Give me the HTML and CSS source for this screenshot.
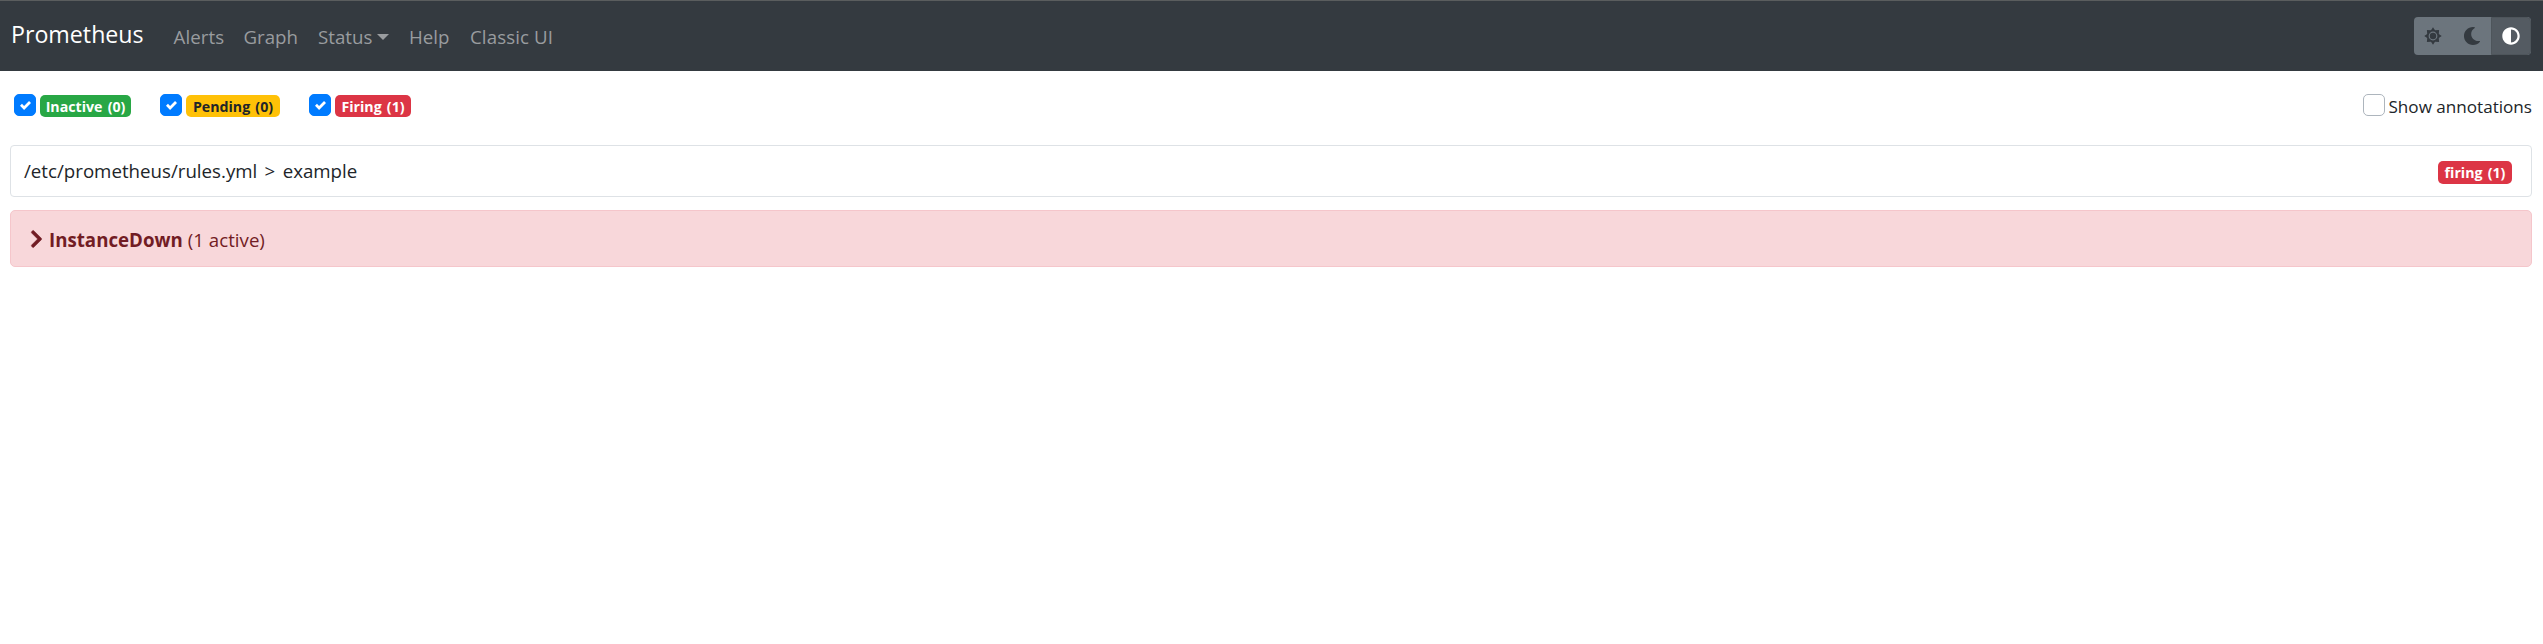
FILE: index.html
```html
<!DOCTYPE html>
<html lang="en">
<head>
<meta charset="utf-8">
<title>Prometheus</title>
<link rel="stylesheet" href="styles.css">
</head>
<body>
<nav class="navbar">
  <a class="brand"><span>Prometheus</span></a>
  <div class="links">
    <a class="w-alerts">Alerts</a>
    <a class="w-graph">Graph</a>
    <a class="w-status">Status<i class="caret"></i></a>
    <a class="w-help">Help</a>
    <a class="w-classic">Classic UI</a>
  </div>
  <div class="themes">
    <button class="theme"><svg width="18" height="18" viewBox="0 0 18 18"><path fill="currentColor" fill-rule="evenodd" d="M9 0.3 11 3.2 15.1 2.9 14.8 7 17.7 9 14.8 11 15.1 15.1 11 14.8 9 17.7 7 14.8 2.9 15.1 3.2 11 .3 9 3.2 7 2.9 2.9 7 3.2ZM9 4.6A4.4 4.4 0 1 0 9 13.4 4.4 4.4 0 1 0 9 4.6Z"/><circle cx="9" cy="9" r="3.2" fill="currentColor"/></svg></button>
    <button class="theme"><svg width="18" height="18" viewBox="0 0 512 512"><path fill="currentColor" d="M283.211 512c78.962 0 151.079-35.925 198.857-94.792 7.068-8.708-.639-21.43-11.562-19.35-124.203 23.654-238.262-71.576-238.262-196.954 0-72.222 38.662-138.635 101.498-174.394 9.686-5.512 7.25-20.197-3.756-22.23A258.156 258.156 0 0 0 283.211 0c-141.309 0-256 114.511-256 256 0 141.309 114.511 256 256 256z"/></svg></button>
    <button class="theme active"><svg width="18" height="18" viewBox="0 0 512 512"><path fill="currentColor" d="M8 256c0 136.966 111.033 248 248 248s248-111.034 248-248S392.966 8 256 8 8 119.033 8 256zm248 184V72c101.705 0 184 82.311 184 184 0 101.705-82.311 184-184 184z"/></svg></button>
  </div>
</nav>
<main>
  <div class="filters">
    <label class="filter f1"><span class="box on"><svg width="11" height="11" viewBox="0 0 8 8"><path fill="#fff" d="M6.564.75l-3.59 3.612-1.538-1.55L0 4.26l2.974 2.99L8 2.193z"/></svg></span><span class="badge green">Inactive (0)</span></label>
    <label class="filter f2"><span class="box on"><svg width="11" height="11" viewBox="0 0 8 8"><path fill="#fff" d="M6.564.75l-3.59 3.612-1.538-1.55L0 4.26l2.974 2.99L8 2.193z"/></svg></span><span class="badge yellow">Pending (0)</span></label>
    <label class="filter f3"><span class="box on"><svg width="11" height="11" viewBox="0 0 8 8"><path fill="#fff" d="M6.564.75l-3.59 3.612-1.538-1.55L0 4.26l2.974 2.99L8 2.193z"/></svg></span><span class="badge red firing">Firing (1)</span></label>
    <label class="filter annotations"><span class="box"></span><span class="show">Show annotations</span></label>
  </div>
  <div class="group"><span class="path">/etc/prometheus/rules.yml &gt; example</span><span class="badge red state">firing (1)</span></div>
  <div class="alert"><svg class="chevron" width="13" height="20" viewBox="0 0 320 512"><path fill="currentColor" stroke="currentColor" stroke-width="12" d="M285.476 272.971L91.132 467.314c-9.373 9.373-24.569 9.373-33.941 0l-22.667-22.667c-9.357-9.357-9.375-24.522-.04-33.901L188.505 256 34.484 101.255c-9.335-9.379-9.317-24.544.04-33.901l22.667-22.667c9.373-9.373 24.569-9.373 33.941 0L285.475 239.03c9.373 9.372 9.373 24.568.001 33.941z"/></svg><strong>InstanceDown</strong><span class="count">(1 active)</span></div>
</main>
</body>
</html>
```
FILE: styles.css
```css
* { box-sizing: border-box; }
body {
  margin: 0;
  background: #fff;
  color: #212529;
  font: 18.7px/30px "Open Sans", "Noto Sans", sans-serif;
  white-space: nowrap;
}
.navbar {
  display: flex;
  height: 71px;
  padding: 0 12px 0 11px;
  border-top: 1px solid #5a5d5e;
  background: #343a40;
}
.brand { width: 162.5px; padding-top: 15px; font-size: 23.2px; line-height: 36px; color: #fff; }
.links { display: flex; padding-top: 21px; color: #999c9f; }
.w-alerts { width: 70px; }
.w-graph { width: 74.5px; }
.w-status { display: flex; width: 91px; }
.w-help { width: 61px; }
.w-alerts, .w-classic { letter-spacing: 0.1px; }
.caret {
  margin: 12px 0 0 5px;
  width: 0;
  height: 0;
  border: 6px solid transparent;
  border-top-color: currentColor;
  border-bottom: 0;
}
.themes { display: flex; margin: 16px 0 0 auto; height: 38px; border-radius: 4px; overflow: hidden; background: #6c757d; }
.theme {
  display: flex;
  align-items: center;
  justify-content: center;
  width: 38.5px;
  padding: 0;
  border: 0;
  background: none;
  color: #343a40;
}
.theme.active { width: 40px; border: 1px solid #4e555b; border-radius: 0 4px 4px 0; background: #545b62; color: #fff; }
main { padding: 23px 11px 0 10px; }
.filters { display: flex; height: 22px; margin-bottom: 29px; padding-left: 4px; }
.filter { display: flex; gap: 4px; }
.f1 { width: 146px; }
.f2 { width: 149px; }
.box {
  display: flex;
  align-items: center;
  justify-content: center;
  width: 22px;
  height: 22px;
  border: 1px solid #adb5bd;
  border-radius: 5px;
}
.box.on { border-color: #007bff; background: #007bff; }
.badge {
  height: 22px;
  margin-top: 1px;
  border-radius: 5px;
  font-size: 14.2px;
  font-weight: 700;
  line-height: 23px;
  text-align: center;
  word-spacing: 1.5px;
  color: #fff;
}
.green { width: 91px; background: #28a745; }
.yellow { width: 94px; background: #ffc107; color: #212529; }
.red { background: #dc3545; }
.firing { width: 76px; }
.annotations { margin-left: auto; line-height: 25px; }
.show { font-size: 17.1px; }
.group {
  display: flex;
  justify-content: space-between;
  height: 52px;
  padding: 10px 19px 0 13px;
  border: 1px solid #dee2e6;
  border-radius: 4px;
}
.path { word-spacing: 2.5px; }
.state { width: 74px; margin-top: 5px; height: 23px; }
.alert {
  display: flex;
  align-items: flex-start;
  height: 57px;
  margin-top: 13px;
  padding: 14px 20px 0 19px;
  border: 1px solid #f5c6cb;
  border-radius: 5px;
  background: #f8d7da;
  color: #721c24;
}
.chevron { margin-top: 4px; }
.alert strong { margin: 0 5px 0 6px; }
```
